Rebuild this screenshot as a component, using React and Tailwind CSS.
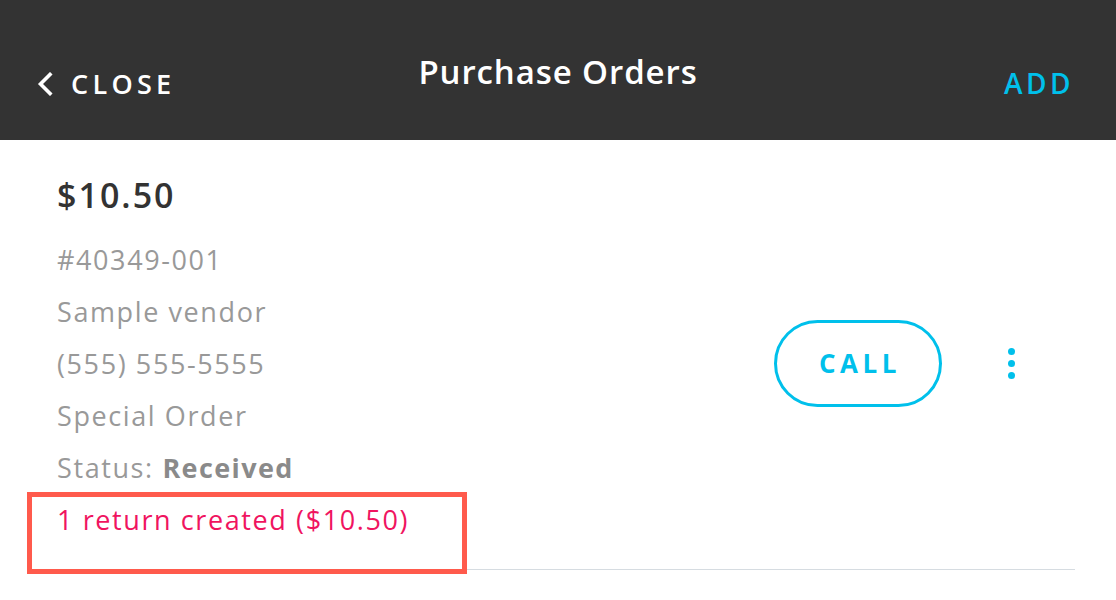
const font = { fontFamily: '"Open Sans", "Liberation Sans", sans-serif' }

export default function App() {
  return (
    <div className="w-[1116px] h-[600px] bg-white overflow-hidden" style={font}>
      {/* Header */}
      <header className="h-[140px] bg-[#333333] flex items-start justify-between pl-[37px] pr-[42px] relative">
        <button className="flex items-center gap-[18px] mt-[70px] text-white">
          <svg width="16" height="24" viewBox="0 0 16 24" fill="none">
            <path d="M13 2.5 L3.5 12 L13 21.5" stroke="currentColor" strokeWidth="3.6" strokeLinecap="square" />
          </svg>
          <span className="text-[27px] font-semibold tracking-[4.3px] leading-none">CLOSE</span>
        </button>
        <h1 className="absolute left-0 right-0 top-[55px] text-center text-white text-[33px] font-semibold leading-none tracking-[0.9px] pointer-events-none">
          Purchase Orders
        </h1>
        <button className="mt-[69px] text-[#00c0eb] text-[28px] font-semibold tracking-[3.5px] leading-none">
          ADD
        </button>
      </header>

      {/* Order row */}
      <div className="relative pl-[57px] pr-[41px]">
        <div className="flex items-center justify-between border-b border-[#d6dce1] pt-[33px] pb-[23px]">
          <div>
            <div className="text-[34px] font-semibold text-[#333333] leading-[44px] tracking-[2px]">$10.50</div>
            <div className="mt-[17px] text-[27px] text-[#999999] leading-[52px] tracking-[1.6px]">
              <div>#40349-001</div>
              <div>Sample vendor</div>
              <div>(555) 555-5555</div>
              <div>Special Order</div>
              <div>
                Status: <span className="font-bold text-[#8a8a8a] tracking-[1.4px]">Received</span>
              </div>
              <div className="text-[#f0145f]">1 return created ($10.50)</div>
            </div>
          </div>
          <div className="flex items-center gap-[65px] mt-[8px] mr-[60px]">
            <button className="w-[168px] h-[87px] rounded-full border-[3px] border-[#00c0eb] text-[#00c0eb] text-[26px] font-bold tracking-[4.5px] pl-[4px]">
              CALL
            </button>
            <div className="flex flex-col gap-[5px] items-center w-[8px]">
              <span className="w-[7px] h-[7px] rounded-full bg-[#00c0eb]" />
              <span className="w-[7px] h-[7px] rounded-full bg-[#00c0eb]" />
              <span className="w-[7px] h-[7px] rounded-full bg-[#00c0eb]" />
            </div>
          </div>
        </div>

        {/* Annotation box */}
        <div className="absolute left-[27px] top-[352px] w-[440px] h-[82px] border-[5px] border-[#ff5a4c] pointer-events-none" />
      </div>
    </div>
  )
}
